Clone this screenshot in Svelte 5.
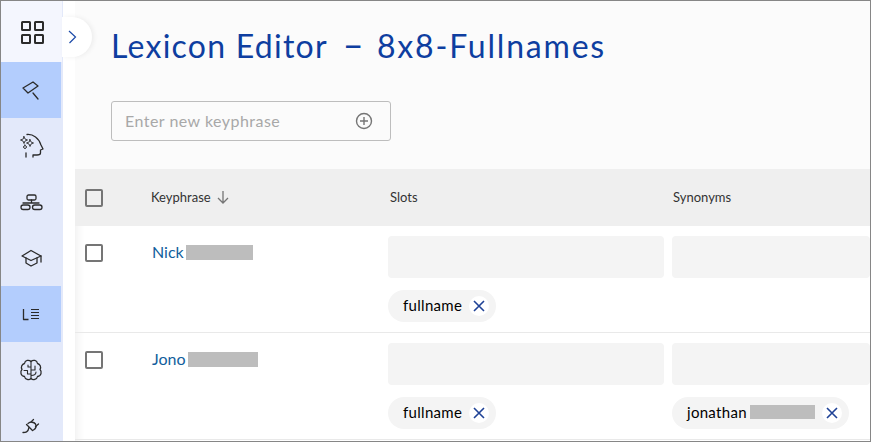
<script lang="ts">
	type Chip = { label: string; blur?: number };
	type Row = { name: string; blur: number; slots: Chip[]; synonyms: Chip[] };

	const rows: Row[] = [
		{ name: 'Nick', blur: 67, slots: [{ label: 'fullname' }], synonyms: [] },
		{
			name: 'Jono',
			blur: 70,
			slots: [{ label: 'fullname' }],
			synonyms: [{ label: 'jonathan', blur: 65 }]
		}
	];

	const navItems = ['grid', 'hammer', 'head', 'flow', 'cap', 'lexicon', 'brain', 'plug'];
	const activeItems = ['hammer', 'lexicon'];
</script>

<div class="window">
	<nav class="rail">
		{#each navItems as item}
			<div class="nav-item" class:active={activeItems.includes(item)}>
				<svg width="28" height="28" viewBox="0 0 28 28" fill="none" stroke="#2b2b2b" stroke-width="1.3" stroke-linecap="round" stroke-linejoin="round">
					{#if item === 'grid'}
						<g stroke-width="2" stroke-linecap="butt">
							<rect x="4" y="4" width="8" height="8" rx="0.5" />
							<rect x="17" y="4" width="8" height="8" rx="0.5" />
							<rect x="4" y="17" width="8" height="8" rx="0.5" />
							<rect x="17" y="17" width="8" height="8" rx="0.5" />
						</g>
					{:else if item === 'hammer'}
						<path d="M6 12 L16 6 L21 10 L11 17 Z" />
						<path d="M16 17 L21 23" />
					{:else if item === 'head'}
						<path d="M10 2.500 C16 2 22 6 24 13 L26 17 L23.500 18 V21 C23.500 22.500 22 23 20 23 L16 23 V25" />
						<path d="M9 21 V25" />
						<path d="M7 4.500 L8 7 L10.500 8 L8 9 L7 11.500 L6 9 L3.500 8 L6 7 Z" stroke-width="0.9" />
						<path d="M13 7.500 L14 10 L16.500 11 L14 12 L13 14.500 L12 12 L9.500 11 L12 10 Z" stroke-width="0.9" />
						<path d="M8 13 L8.700 14.300 L10 15 L8.700 15.700 L8 17 L7.300 15.700 L6 15 L7.300 14.300 Z" stroke-width="0.9" />
					{:else if item === 'flow'}
						<rect x="10" y="7" width="9" height="5" rx="1.500" />
						<rect x="4" y="17" width="9" height="4.500" rx="2.200" />
						<rect x="15.500" y="17" width="9.500" height="4.500" rx="2.200" />
						<path d="M14.500 12 V15 M6 15 H22" />
					{:else if item === 'cap'}
						<path d="M14 6.500 L24 12 L14 16.500 L5 12 Z" />
						<path d="M9 14 V19 L14 22 L20 19 V14" />
						<path d="M24 12 V18" />
					{:else if item === 'lexicon'}
						<path d="M6.500 9 V19.500 H11.500" stroke-linecap="butt" stroke-width="1.300" />
						<path d="M14 9.500 H22 M14 12.500 H22 M14 15.500 H22 M14 18.500 H22" stroke-linecap="butt" stroke-width="1.100" />
					{:else if item === 'brain'}
						<path d="M14 5.500 C12 3.500 8 4 7.500 7.500 C5 8 3.500 11 5 13.500 C3 15.500 3.500 20 7.500 20.500 C8 23.500 12 24.500 14 22.500 C16 24.500 20 23.500 20.500 20.500 C24.500 20 25 15.500 23 13.500 C24.500 11 23 8 20.500 7.500 C20 4 16 3.500 14 5.500 Z" />
						<path d="M14 5.500 V22.500 M14 11 H11 V9 M14 18 H10.500 V14.500 H7 M14 14 H18 V10 M14 19.500 C17 19.500 19 18.500 19 16" stroke-width="1.100" />
					{:else}
						<path d="M9.500 12.500 L15.500 18.500 M11 11.500 C13.500 9.500 17 10 18.500 12 C19.500 14 19 16.500 16.500 18" />
						<path d="M14 10 L16.500 7.500 M18.500 14.500 L21.500 12" />
						<path d="M6 20.500 C8.500 20.500 11 20.500 12 15.500" />
					{/if}
				</svg>
			</div>
		{/each}
	</nav>

	<main class="content">
		<button class="collapse" aria-label="Expand menu">
			<svg width="10" height="16" viewBox="0 0 10 16" fill="none" stroke="#1b4aa8" stroke-width="1.2">
				<path d="M2 2 L8.500 8 L2.500 14" />
			</svg>
		</button>

		<header class="top">
			<h1>Lexicon Editor<span class="sep">–</span><span class="lexicon-name">8x8-Fullnames</span></h1>
			<div class="new-phrase">
				<span>Enter new keyphrase</span>
				<svg width="18" height="18" viewBox="0 0 18 18" fill="none" stroke="#757575" stroke-width="1.4">
					<circle cx="9" cy="9" r="7.500" />
					<path d="M9 5 V13 M5 9 H13" />
				</svg>
			</div>
		</header>

		<div class="table">
			<div class="row head">
				<div class="cell-check"><span class="box"></span></div>
				<div class="cell-name">
					Keyphrase
					<svg width="14" height="14" viewBox="0 0 14 14" fill="none" stroke="#757575" stroke-width="1.3">
						<path d="M7 1 V13 M2 8 L7 13 L12 8" />
					</svg>
				</div>
				<div class="cell-slots">Slots</div>
				<div class="cell-syn">Synonyms</div>
			</div>

			{#each rows as row}
				<div class="row item">
					<div class="cell-check"><span class="box"></span></div>
					<div class="cell-name">
						<a href="#top">{row.name}</a>
						<span class="redact" style="width: {row.blur}px"></span>
					</div>
					<div class="cell-slots">
						<div class="field"></div>
						<div class="chips">
							{#each row.slots as chip}
								<span class="chip">
									{chip.label}
									<span class="remove">
										<svg width="12" height="12" viewBox="0 0 12 12" stroke="#1f4296" stroke-width="1.6"><path d="M1 1 L11 11 M11 1 L1 11" /></svg>
									</span>
								</span>
							{/each}
						</div>
					</div>
					<div class="cell-syn">
						<div class="field"></div>
						<div class="chips">
							{#each row.synonyms as chip}
								<span class="chip">
									{chip.label}
									{#if chip.blur}<span class="redact chip-redact" style="width: {chip.blur}px"></span>{/if}
									<span class="remove">
										<svg width="12" height="12" viewBox="0 0 12 12" stroke="#1f4296" stroke-width="1.6"><path d="M1 1 L11 11 M11 1 L1 11" /></svg>
									</span>
								</span>
							{/each}
						</div>
					</div>
				</div>
			{/each}
		</div>
	</main>
</div>

<style>
	:global(body) {
		margin: 0;
		background: #fff;
	}

	.window {
		width: 871px;
		height: 442px;
		box-sizing: border-box;
		border: 1px solid #868686;
		display: flex;
		overflow: hidden;
		font-family: Lato, 'Noto Sans', sans-serif;
	}

	.rail {
		width: 62px;
		flex: none;
		background: #e3e9fa;
		display: flex;
		flex-direction: column;
	}

	.nav-item {
		height: 56px;
		width: 60px;
		flex: none;
		display: flex;
		align-items: center;
		justify-content: center;
	}

	.nav-item:first-child {
		background: #f4f6fe;
		width: 61px;
		height: 61px;
	}

	.nav-item.active {
		background: #b3cdfd;
	}

	.content {
		flex: 1;
		min-width: 0;
		margin-left: 12px;
		background: #fff;
		position: relative;
		box-shadow: inset 12px 0 10px -10px #eeeeee;
	}

	.collapse {
		position: absolute;
		left: -13px;
		top: 16px;
		width: 30px;
		height: 40px;
		border: 0;
		padding: 0 0 0 5px;
		background: #fff;
		border-radius: 0 20px 20px 0;
		box-shadow: 2px 0 5px rgba(0, 0, 0, 0.06);
		display: flex;
		align-items: center;
		justify-content: flex-start;
	}

	.top {
		height: 168px;
		background: #fbfbfb;
		padding: 0 0 0 36px;
	}

	h1 {
		margin: 0;
		padding-top: 24px;
		font-size: 32px;
		line-height: 42px;
		font-weight: 400;
		letter-spacing: 1.25px;
		color: #0e3ea0;
		white-space: nowrap;
	}

	.sep {
		font-size: 36px;
		line-height: 1;
		margin: 0 12px 0 15px;
	}

	.lexicon-name {
		letter-spacing: 1.8px;
	}

	.new-phrase {
		margin-top: 34px;
		width: 280px;
		height: 40px;
		box-sizing: border-box;
		border: 1px solid #bdbdbd;
		border-radius: 3px;
		padding: 0 17px 0 13px;
		display: flex;
		align-items: center;
		justify-content: space-between;
		color: #a8a8a8;
		font-size: 16px;
		letter-spacing: 0.47px;
	}

	.new-phrase span {
		padding-bottom: 2px;
	}

	.row {
		display: grid;
		grid-template-columns: 76px 237px 284px 1fr;
	}

	.head {
		height: 57px;
		background: #efefef;
		align-items: center;
		font-size: 13px;
		color: #333;
	}

	.head .cell-name,
	.head .cell-slots,
	.head .cell-syn {
		padding-bottom: 2px;
	}

	.head .cell-name {
		display: flex;
		align-items: center;
		gap: 5px;
	}

	.head .cell-slots {
		padding-left: 2px;
	}

	.head .cell-syn {
		padding-left: 1px;
	}

	.item {
		height: 107px;
		box-sizing: border-box;
		border-bottom: 1px solid #e9e9e9;
		padding-top: 10px;
		overflow: hidden;
	}

	.cell-check {
		padding-left: 10px;
	}

	.item .cell-check {
		padding-top: 8px;
	}

	.box {
		display: block;
		width: 14px;
		height: 14px;
		border: 2px solid #757575;
		border-radius: 2px;
	}

	.item .cell-name {
		padding: 6px 0 0 1px;
		font-size: 16px;
		display: flex;
		align-items: flex-start;
		gap: 2px;
	}

	a {
		color: #115e9c;
		text-decoration: none;
	}

	.redact {
		display: inline-block;
		height: 15px;
		background: #bdbdbd;
		margin-top: 3px;
	}

	.field {
		height: 42px;
		background: #f4f4f4;
		border-radius: 4px;
		margin-right: 8px;
	}

	.cell-syn .field {
		margin-right: 0;
	}

	.chips {
		margin-top: 12px;
		height: 32px;
		display: flex;
	}

	.chip {
		height: 32px;
		box-sizing: border-box;
		padding: 0 7px 2px 15px;
		border-radius: 16px;
		background: #f4f4f4;
		display: inline-flex;
		align-items: center;
		font-size: 15px;
		font-weight: 400;
		letter-spacing: 0.3px;
		color: #000;
	}

	.chip-redact {
		height: 14px;
		margin: 0 0 0 3px;
	}

	.remove {
		width: 20px;
		height: 20px;
		border-radius: 50%;
		background: #fff;
		margin-left: 7px;
		margin-bottom: -2px;
		display: flex;
		align-items: center;
		justify-content: center;
	}
</style>
